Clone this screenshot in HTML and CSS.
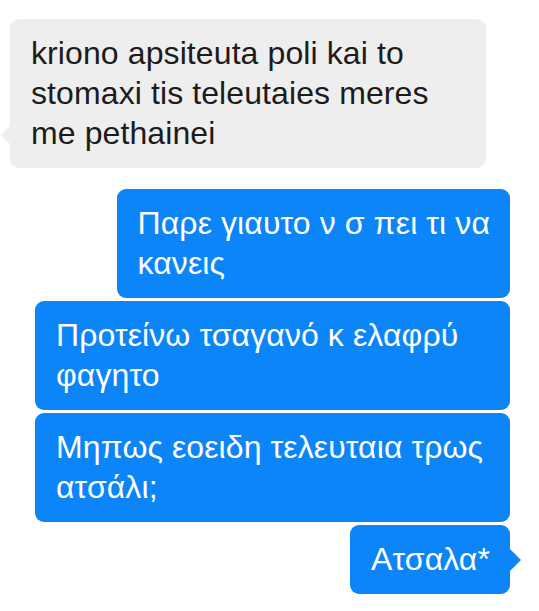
FILE: index.html
```html
<!DOCTYPE html>
<html>
<head>
    <meta charset="UTF-8">
    <title>Messages</title>
    <link rel="stylesheet" href="styles.css">
</head>
<body>
<div class="thread">
    <div class="msg in tail">kriono apsiteuta poli kai to<br>stomaxi tis teleutaies meres<br>me pethainei</div>
    <div class="msg out first">Παρε γιαυτο ν σ πει τι να<br>κανεις</div>
    <div class="msg out wide">Προτείνω τσαγανό κ ελαφρύ<br>φαγητο</div>
    <div class="msg out wide">Μηπως εοειδη τελευταια τρως<br>ατσάλι;</div>
    <div class="msg out tail">Ατσαλα*</div>
</div>
</body>
</html>
```

FILE: styles.css
```css
body{margin:0;background:#fff;font-family:"Liberation Sans",Arial,sans-serif;}
.thread{display:flex;flex-direction:column;align-items:flex-start;gap:3px;padding:19px 29px 18px 10px;}
.msg{position:relative;font-size:32px;line-height:40px;letter-spacing:0.1px;padding:14px 20px 15px 21px;border-radius:9px;}
.msg.in{background:#efeeef;color:#1c1c1c;align-self:stretch;margin-right:24px;margin-bottom:18px;}
.msg.out{background:#0b85f8;color:#fff;align-self:flex-end;}
.msg.out.wide{align-self:stretch;margin-left:25px;}
.msg.in.tail::before{content:"";position:absolute;left:-9px;top:106px;border-style:solid;border-width:10px 10px 10px 0;border-color:transparent #efeeef transparent transparent;}
.msg.out.tail::after{content:"";position:absolute;right:-11px;top:24px;border-style:solid;border-width:11px 0 11px 11px;border-color:transparent transparent transparent #0b85f8;}
```
